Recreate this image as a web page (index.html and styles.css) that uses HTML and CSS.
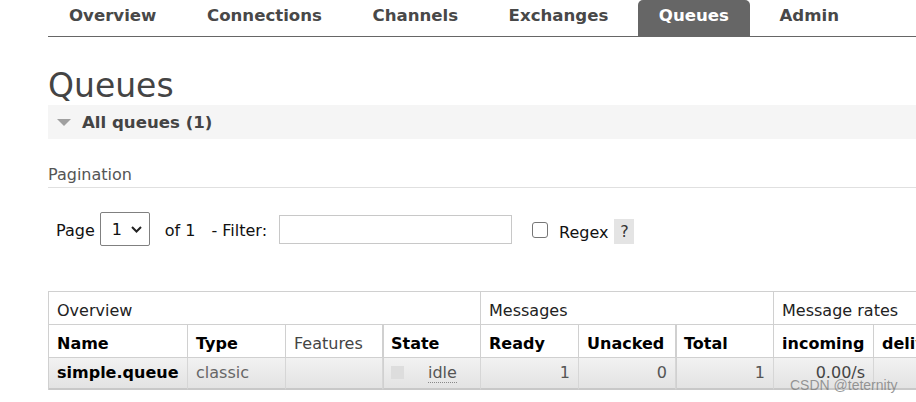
FILE: index.html
```html
<!DOCTYPE html>
<html lang="en">
<head>
<meta charset="utf-8">
<title>RabbitMQ Management - Queues</title>
<link rel="stylesheet" href="styles.css">
</head>
<body>
<div class="page">
  <nav class="tabs">
    <ul>
      <li><a>Overview</a></li>
      <li><a>Connections</a></li>
      <li><a>Channels</a></li>
      <li><a>Exchanges</a></li>
      <li class="active"><a>Queues</a></li>
      <li><a>Admin</a></li>
    </ul>
  </nav>

  <h1 class="title">Queues</h1>

  <div class="section-head"><span class="tri"></span>All queues (1)</div>

  <h3 class="subhead">Pagination</h3>

  <div class="filter-row">
    <span class="lbl">Page</span>
    <span class="select"><span class="sel-val">1</span><svg class="chev" width="11" height="7" viewBox="0 0 11 7"><path d="M1 1l4.5 4.5L10 1" fill="none" stroke="#222" stroke-width="2"/></svg></span>
    <span class="lbl of">of 1</span>
    <span class="lbl filter">- Filter:</span>
    <span class="text-input"></span>
    <span class="checkbox"></span>
    <span class="lbl regex">Regex</span>
    <span class="help">?</span>
  </div>

  <div class="table-wrap">
    <table class="list">
      <colgroup>
        <col class="c-name"><col class="c-type"><col class="c-feat"><col class="c-state">
        <col class="c-ready"><col class="c-unack"><col class="c-total">
        <col class="c-rate"><col class="c-rate"><col class="c-rate">
      </colgroup>
      <thead>
        <tr class="group">
          <th colspan="4">Overview</th>
          <th colspan="3">Messages</th>
          <th colspan="3">Message rates</th>
        </tr>
        <tr class="cols">
          <th>Name</th>
          <th>Type</th>
          <th class="plain">Features</th>
          <th class="plus">State</th>
          <th>Ready</th>
          <th>Unacked</th>
          <th class="plus">Total</th>
          <th>incoming</th>
          <th>deliver / get</th>
          <th>ack</th>
        </tr>
      </thead>
      <tbody>
        <tr class="data">
          <td class="name">simple.queue</td>
          <td class="type">classic</td>
          <td></td>
          <td class="plus state"><span class="sq"></span><abbr class="idle">idle</abbr></td>
          <td class="num">1</td>
          <td class="num">0</td>
          <td class="num plus">1</td>
          <td class="num rate">0.00/s</td>
          <td class="num rate"></td>
          <td class="num rate"></td>
        </tr>
      </tbody>
    </table>
  </div>
</div>
<span class="watermark">CSDN @teternity</span>
</body>
</html>
```

FILE: styles.css
```css
html, body {
  margin: 0;
  padding: 0;
  overflow: hidden;
  background: #fff;
}

body {
  font-family: "DejaVu Sans", Verdana, sans-serif;
  font-size: 16px;
  color: #333;
  position: relative;
  width: 916px;
  height: 402px;
}

.page {
  padding-left: 48px;
}

/* ---------- tabs ---------- */
.tabs ul {
  display: flex;
  gap: 8.5px;
  margin: 0;
  padding: 0;
  list-style: none;
  border-bottom: 1px solid #666;
}

.tabs li a {
  display: block;
  padding: 1px 21px 5px;
  line-height: 30px;
  font-weight: bold;
  font-size: 16.6px;
  color: #484848;
}

.tabs li.active a {
  background: #666;
  color: #fff;
  border-radius: 5px 5px 0 0;
}

/* ---------- heading ---------- */
.title {
  margin: 30px 0 0;
  font-size: 33px;
  line-height: 38px;
  font-weight: normal;
  color: #444;
}

.section-head {
  display: flex;
  align-items: center;
  height: 34px;
  padding-left: 9px;
  background: #f5f5f5;
  font-weight: bold;
  font-size: 16.6px;
  color: #444;
}

.tri {
  width: 0;
  height: 0;
  border-left: 7.5px solid transparent;
  border-right: 7.5px solid transparent;
  border-top: 7px solid #a0a0a0;
  margin-right: 11px;
}

.subhead {
  margin: 26px 0 0;
  font-size: 16px;
  line-height: 20px;
  font-weight: normal;
  color: #555;
  padding-bottom: 2px;
  border-bottom: 1px solid #e0e0e0;
}

/* ---------- filter row ---------- */
.filter-row {
  display: flex;
  align-items: center;
  height: 34px;
  margin-top: 24px;
  padding-left: 8px;
  color: #111;
}

.lbl {
  line-height: 20px;
  padding-top: 3px;
}

.select {
  display: flex;
  align-items: center;
  box-sizing: border-box;
  width: 50px;
  height: 34px;
  margin-left: 5px;
  padding-left: 11px;
  border: 1px solid #808080;
  border-radius: 2px;
}

.sel-val {
  margin-right: 9px;
  padding-top: 1px;
}

.of {
  margin-left: 15px;
}

.filter {
  margin-left: 16px;
}

.text-input {
  box-sizing: border-box;
  width: 233px;
  height: 29px;
  margin-left: 12px;
  border: 1px solid #c8c8c8;
}

.checkbox {
  box-sizing: border-box;
  width: 16px;
  height: 16px;
  margin-left: 20px;
  margin-top: 2px;
  border: 1px solid #767676;
  border-radius: 3px;
}

.regex {
  margin-left: 11px;
  padding-top: 7px;
}

.help {
  width: 20px;
  height: 25px;
  margin-left: 6px;
  margin-top: 4px;
  background: #e4e4e4;
  text-align: center;
  line-height: 25px;
  color: #333;
}

/* ---------- table ---------- */
.table-wrap {
  margin-top: 45px;
}

.list {
  border-collapse: separate;
  border-spacing: 0;
  table-layout: fixed;
  width: 1026px;
  border-top: 1px solid #d0d0d0;
  border-left: 1px solid #d0d0d0;
}

.c-name { width: 139px; }
.c-type { width: 98px; }
.c-feat { width: 97px; }
.c-state { width: 98px; }
.c-ready { width: 98px; }
.c-unack { width: 97px; }
.c-total { width: 98px; }
.c-rate { width: 100px; }

.list th,
.list td {
  padding: 6px 8px;
  line-height: 20px;
  text-align: left;
  white-space: nowrap;
  overflow: hidden;
  border-right: 1px solid #d0d0d0;
  border-bottom: 1px solid #d0d0d0;
}

.list th {
  padding-top: 9px;
  padding-bottom: 3px;
}

.list tr.group th {
  font-weight: normal;
  color: #222;
}

.list tr.cols th {
  font-weight: bold;
  color: #000;
}

.list tr.cols th.plain {
  font-weight: normal;
  color: #444;
}

.list .plus {
  border-left: 1px solid #d0d0d0;
  padding-left: 7px;
}

.list tr.data td {
  background: linear-gradient(#f2f2f2, #e3e3e3);
  border-bottom: 2px solid #c8c8c8;
  border-right-color: #d6d6d6;
  padding-top: 5px;
  padding-bottom: 5px;
}

.list td.name {
  font-weight: bold;
  color: #000;
}

.list td.type {
  color: #666;
}

.sq {
  display: inline-block;
  width: 13px;
  height: 13px;
  background: #ddd;
  vertical-align: -1px;
  margin-right: 24px;
}

.idle {
  text-decoration: none;
  color: #555;
  border-bottom: 1px dotted #888;
}

.list td.num {
  text-align: right;
  color: #555;
}

.list td.rate {
  color: #444;
}

/* ---------- overlay watermark ---------- */
.watermark {
  position: absolute;
  left: 790px;
  top: 377px;
  font-family: "Liberation Sans", Arial, sans-serif;
  font-size: 14px;
  color: rgba(120, 120, 120, 0.75);
}
```
